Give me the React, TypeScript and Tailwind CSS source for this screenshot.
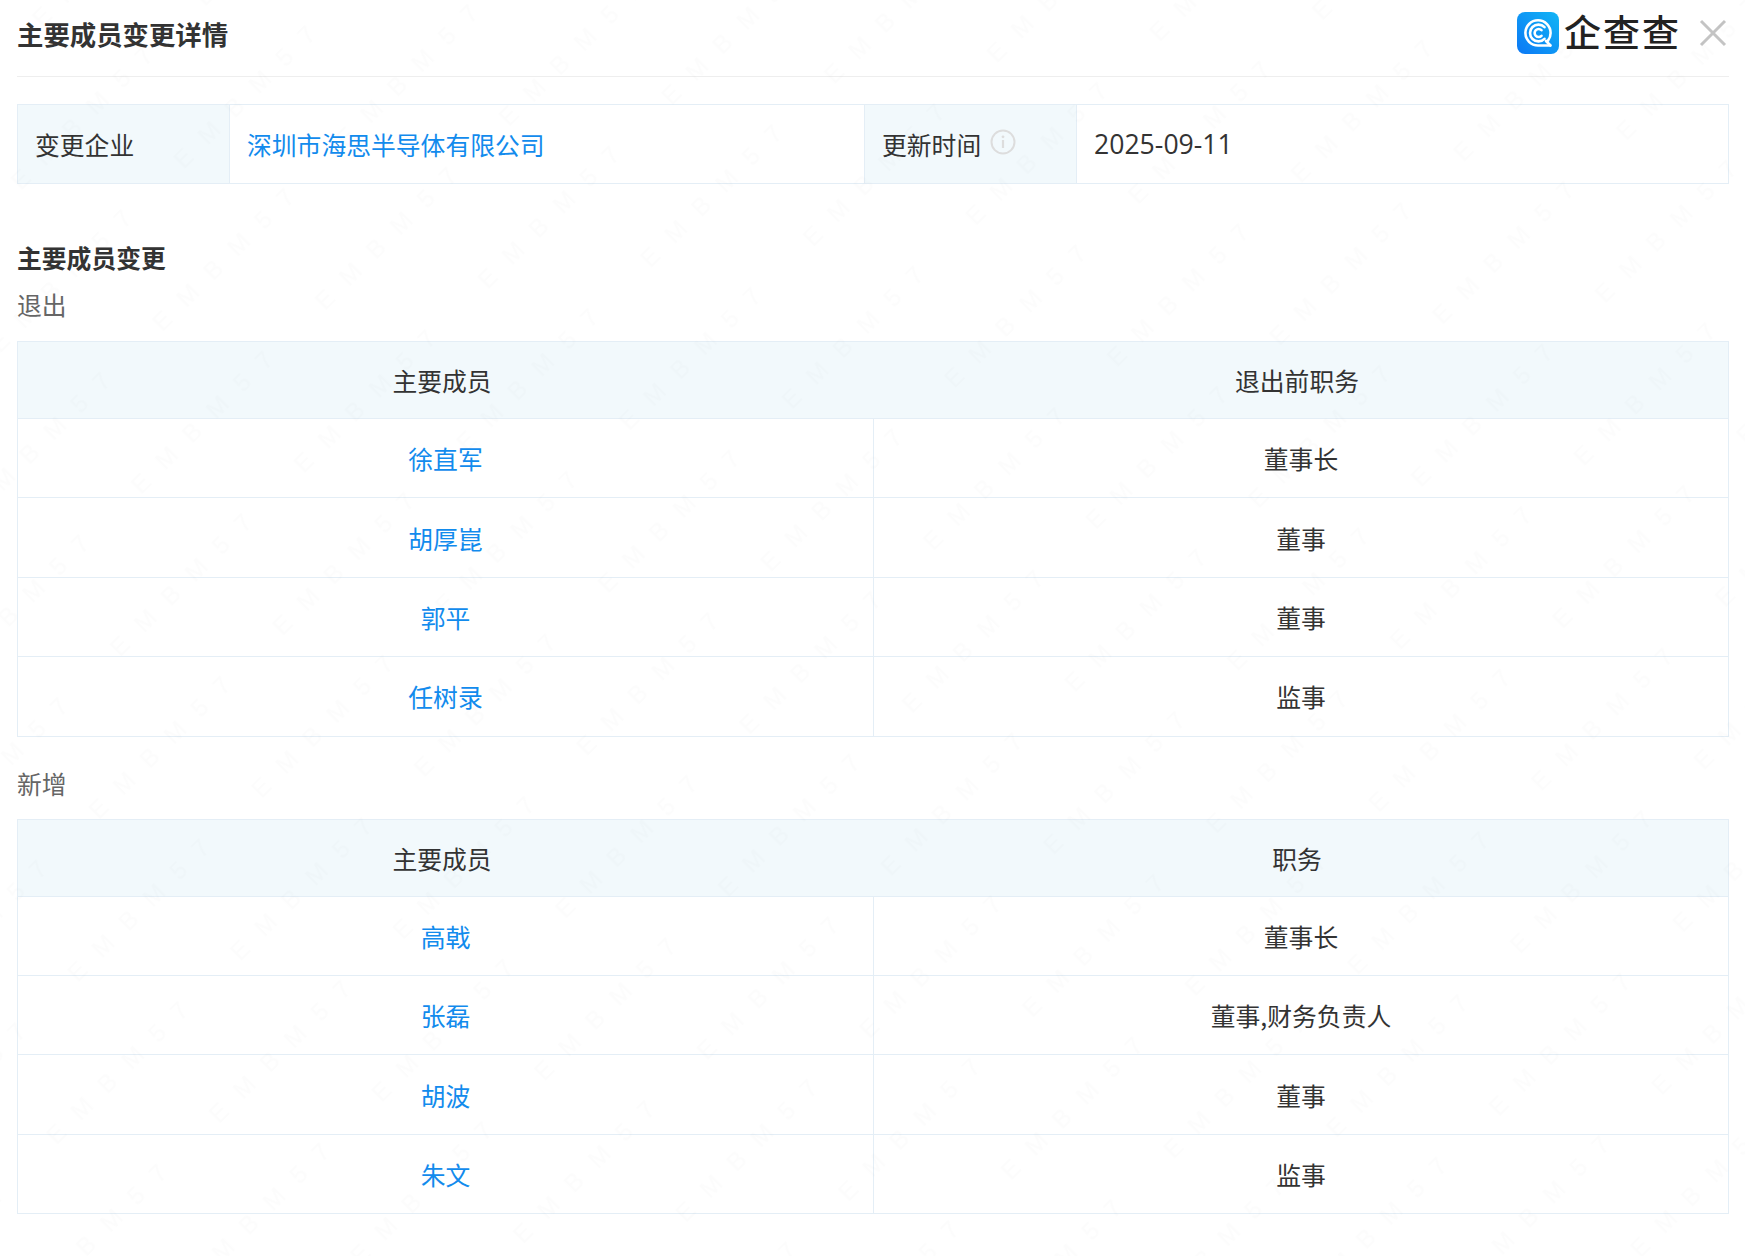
const members = {
  removed: [
    { name: '徐直军', post: '董事长' },
    { name: '胡厚崑', post: '董事' },
    { name: '郭平', post: '董事' },
    { name: '任树录', post: '监事' },
  ],
  added: [
    { name: '高戟', post: '董事长' },
    { name: '张磊', post: '董事,财务负责人' },
    { name: '胡波', post: '董事' },
    { name: '朱文', post: '监事' },
  ],
};

function Logo() {
  return (
    <svg width="42" height="42" viewBox="0 0 42 42" className="shrink-0">
      <defs>
        <linearGradient id="qcc" x1="1" y1="0" x2="0" y2="1">
          <stop offset="0" stopColor="#12b5f5" />
          <stop offset="1" stopColor="#0b78f5" />
        </linearGradient>
      </defs>
      <rect width="42" height="42" rx="8" fill="url(#qcc)" />
      <g fill="none" stroke="#fff" strokeLinecap="round" strokeWidth="2.6">
        <path d="M33 33.5H21A12.6 12.6 0 1 1 33.6 21c0 3-1 5.6-2.6 7.6" />
        <path d="M27.5 15.2A8.4 8.4 0 1 0 27.5 26.8" />
        <path d="M24.5 18.2A4 4 0 1 0 24.5 23.8" />
        <path d="M29 29l4.5 4.5" />
      </g>
    </svg>
  );
}

function MemberTable({ postLabel }: { postLabel: string }) {
  const rows = postLabel === '职务' ? members.added : members.removed;
  return (
    <div className="border border-[#e4eef6] border-b-0">
      <div className="grid grid-cols-2 h-[77px] bg-[#f2f9fc] border-b border-[#e4eef6]">
        <div className="flex items-center justify-center pr-[7px]">主要成员</div>
        <div className="flex items-center justify-center pr-[7px]">{postLabel}</div>
      </div>
      {rows.map((row) => (
        <div key={row.name} className="grid grid-cols-[856px_1fr] h-[79.4px] border-b border-[#e4eef6]">
          <div className="flex items-center justify-center border-r border-[#e4eef6] text-[#128bed]">{row.name}</div>
          <div className="flex items-center justify-center">{row.post}</div>
        </div>
      ))}
    </div>
  );
}

// faint repeating watermark across the whole page
function Watermark() {
  const mark = { fontFamily: 'Liberation Sans', fontSize: 24, letterSpacing: 18, fill: '#000', fillOpacity: 0.013 };
  return (
    <svg className="absolute inset-0 pointer-events-none" width="1745" height="1256">
      <defs>
        <pattern id="wm" width="260" height="200" patternUnits="userSpaceOnUse" patternTransform="rotate(-45)">
          <text x="10" y="50" {...mark}>EMBM57</text>
          <text x="140" y="150" {...mark}>EMBM57</text>
          <text x="-120" y="150" {...mark}>EMBM57</text>
        </pattern>
      </defs>
      <rect width="1745" height="1256" fill="url(#wm)" />
    </svg>
  );
}

export default function App() {
  return (
    <div className="relative overflow-hidden w-[1745px] h-[1256px] bg-white pl-[17px] pr-[16px] text-[24.8px] leading-[36px] text-[#333] font-['Noto_Sans_CJK_SC','Microsoft_YaHei',sans-serif]">
      {/* Header */}
      <div className="flex items-start justify-between h-[77px] border-b border-[#eee]">
        <h1 className="text-[26.4px] font-bold mt-[16px]">主要成员变更详情</h1>
        <div className="flex items-center mt-[12px]">
          <Logo />
          <span className="ml-[5px] text-[37px] leading-[42px] tracking-[2px] text-[#222] font-medium -mt-[4px]">企查查</span>
          <svg width="30" height="30" viewBox="0 0 30 30" className="ml-[17px] mr-[1px]">
            <path d="M3 3l24 24M27 3L3 27" stroke="#c4c4c4" strokeWidth="3" fill="none" />
          </svg>
        </div>
      </div>

      {/* Company info */}
      <div className="mt-[27px] flex h-[80px] border border-[#e4eef6]">
        <div className="w-[212px] shrink-0 flex items-center px-[17px] bg-[#f2f9fc] border-r border-[#e4eef6]">变更企业</div>
        <div className="w-[634px] shrink-0 flex items-center px-[17px] text-[#128bed]">深圳市海思半导体有限公司</div>
        <div className="w-[213px] shrink-0 flex items-center px-[17px] bg-[#f2f9fc] border-x border-[#e4eef6]">
          更新时间
          <svg width="26" height="26" viewBox="0 0 26 26" className="ml-[9px] -mt-[4px]">
            <circle cx="13" cy="13" r="11.5" fill="none" stroke="#ddd" strokeWidth="2" />
            <circle cx="13" cy="7.8" r="1.4" fill="#ddd" />
            <path d="M13 11v8" stroke="#ddd" strokeWidth="2.2" />
          </svg>
        </div>
        <div className="flex-1 flex items-center px-[17px] text-[26.6px] font-['Open_Sans',sans-serif]">2025-09-11</div>
      </div>

      {/* Changes */}
      <h2 className="mt-[55px] font-bold">主要成员变更</h2>
      <div className="mt-[11px] mb-[19px] text-[#666]">退出</div>
      <MemberTable postLabel="退出前职务" />
      <div className="mt-[28px] mb-[18px] text-[#666]">新增</div>
      <MemberTable postLabel="职务" />

      <Watermark />
    </div>
  );
}
